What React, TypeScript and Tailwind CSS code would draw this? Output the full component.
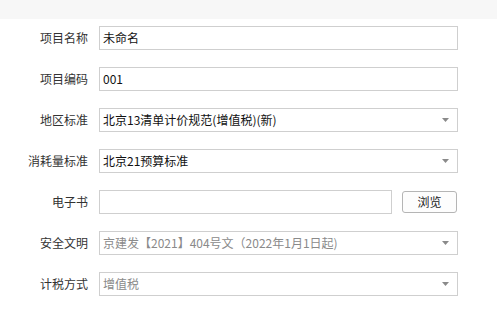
const rows: {
    label: string;
    value: string;
    kind: "input" | "select" | "file";
    disabled?: boolean;
}[] = [
    { label: "项目名称", value: "未命名", kind: "input" },
    { label: "项目编码", value: "001", kind: "input" },
    { label: "地区标准", value: "北京13清单计价规范(增值税)(新)", kind: "select" },
    { label: "消耗量标准", value: "北京21预算标准", kind: "select" },
    { label: "电子书", value: "", kind: "file" },
    {
        label: "安全文明",
        value: "京建发【2021】404号文（2022年1月1日起)",
        kind: "select",
        disabled: true,
    },
    { label: "计税方式", value: "增值税", kind: "select", disabled: true },
];

function Arrow() {
    return (
        <svg width="7" height="4" viewBox="0 0 7 4" className="shrink-0">
            <polygon points="0,0 7,0 3.5,4" fill="#8a8a8a" />
        </svg>
    );
}

export default function App() {
    return (
        <div
            className="w-[497px] h-[335px] bg-white text-[12px] text-[#333]"
            style={{ fontFamily: '"Noto Sans CJK SC", "Noto Sans", sans-serif' }}
        >
            <div className="h-[19px] bg-[#f7f7f7]" />
            <div className="flex flex-col gap-[17px] pt-[7px]">
                {rows.map((row, index) => (
                    <div className="flex flex-row items-center h-[24px]" key={index}>
                        <div className="w-[89px] text-right pr-[1px] leading-[16px] whitespace-nowrap">
                            {row.label}
                        </div>
                        {row.kind === "file" ? (
                            <div className="flex flex-row items-center ml-[10px]">
                                <div className="w-[293px] h-[24px] border border-[#cfcfcf] bg-white" />
                                <button className="ml-[10px] w-[55px] h-[22px] border border-[#b5b5b5] rounded-[3px] bg-[#fdfdfd] text-[12px] text-[#222] leading-[16px]">
                                    浏览
                                </button>
                            </div>
                        ) : (
                            <div className="ml-[10px] w-[359px] h-[24px] border border-[#cfcfcf] bg-white flex flex-row items-center pl-[3px] pr-[8px]">
                                <span
                                    className={`flex-1 whitespace-nowrap overflow-hidden leading-[16px] ${
                                        row.disabled ? "text-[#8a8a8a]" : "text-[#111]"
                                    }`}
                                >
                                    {row.value}
                                </span>
                                {row.kind === "select" && <Arrow />}
                            </div>
                        )}
                    </div>
                ))}
            </div>
        </div>
    );
}
